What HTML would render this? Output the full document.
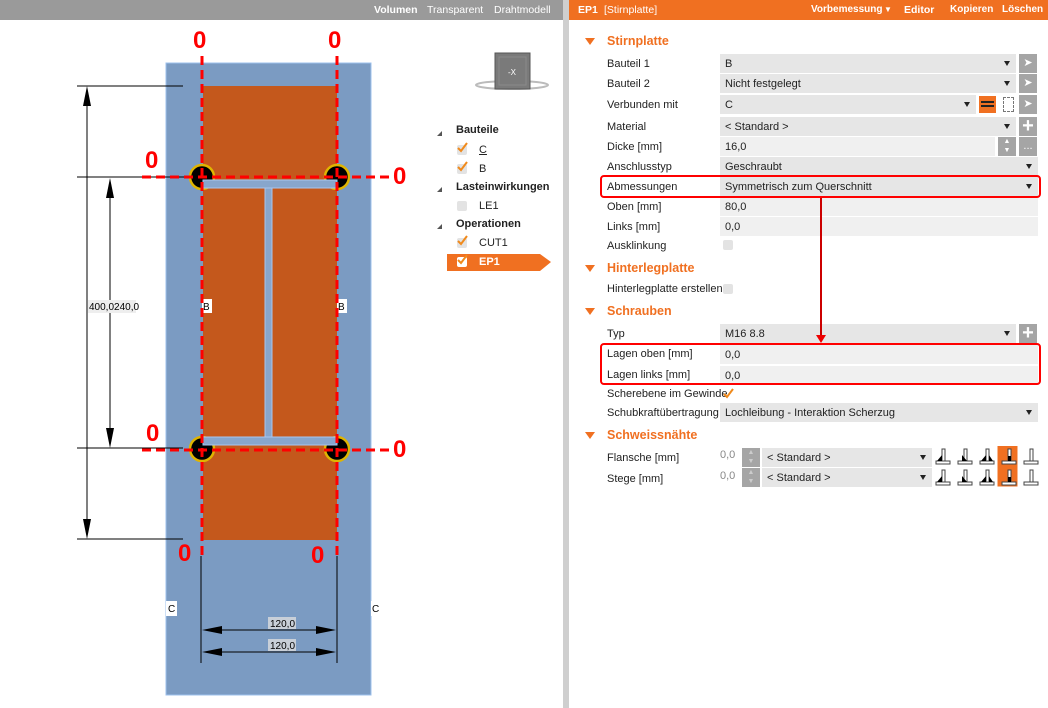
<!DOCTYPE html>
<html><head><meta charset="utf-8"><style>
*{margin:0;padding:0;box-sizing:border-box}
body{width:1048px;height:708px;overflow:hidden;background:#fff;font-family:"Liberation Sans",sans-serif;font-size:11px;color:#222;position:relative}
.a{position:absolute}
.lbl{position:absolute;left:607px;font-size:11px;line-height:14px}
.in{position:absolute;left:720px;height:19px;background:#e6e6e6;padding-left:5px;line-height:20px;font-size:11px}
.tx{background:#f0f0f0}
.dd:after{content:"";position:absolute;right:6px;top:7px;border-left:3.5px solid transparent;border-right:3.5px solid transparent;border-top:5px solid #222}
.btn{position:absolute;left:1019px;width:18px;height:19px;background:#a5a5a5;color:#fff;text-align:center;line-height:18px}
.sec{position:absolute;left:607px;color:#f07021;font-weight:bold;font-size:12.5px}
.tri{position:absolute;left:585px;width:0;height:0;border-left:5px solid transparent;border-right:5px solid transparent;border-top:7px solid #f07021}
.cb{position:absolute;width:10px;height:10px;background:#e3e3e3;border-radius:2px}
.ck{position:absolute;width:12px;height:12px}
.z{position:absolute;color:#f00;font-weight:bold;font-size:24px;line-height:24px}
.tt{position:absolute;width:0;height:0;border-left:5px solid transparent;border-bottom:5px solid #555}
</style></head><body>
<!-- top bars -->
<div class="a" style="left:0;top:0;width:563px;height:20px;background:#9a9a9a"></div>
<div class="a" style="left:374px;top:4px;color:#fff;font-weight:bold;font-size:10.5px">Volumen</div>
<div class="a" style="left:427px;top:4px;color:#fff;font-size:10.5px">Transparent</div>
<div class="a" style="left:494px;top:4px;color:#fff;font-size:10.5px">Drahtmodell</div>
<div class="a" style="left:563px;top:0;width:6px;height:708px;background:#cfcfcf"></div>
<div class="a" style="left:569px;top:0;width:479px;height:20px;background:#f07021"></div>
<div class="a" style="left:578px;top:4px;color:#fff;font-weight:bold;font-size:10.5px">EP1</div>
<div class="a" style="left:604px;top:4px;color:#fff;font-size:10.5px">[Stirnplatte]</div>
<div class="a" style="left:811px;top:4px;color:#fff;font-weight:bold;font-size:10px">Vorbemessung</div>
<div class="a" style="left:884px;top:5px;color:#fff;font-size:8px">▼</div>
<div class="a" style="left:904px;top:4px;color:#fff;font-weight:bold;font-size:10.5px">Editor</div>
<div class="a" style="left:950px;top:4px;color:#fff;font-weight:bold;font-size:10px">Kopieren</div>
<div class="a" style="left:1002px;top:4px;color:#fff;font-weight:bold;font-size:10px">Löschen</div>

<!-- drawing -->
<svg class="a" style="left:0;top:0" width="563" height="708">
<rect x="166" y="63" width="205" height="632" fill="#7b9bc2" stroke="#9ec0ec"/>
<rect x="203" y="86" width="134" height="454" fill="#c4581c"/>
<g stroke="#000" stroke-width="1" fill="none">
<line x1="77" y1="86" x2="183" y2="86"/><line x1="77" y1="177" x2="200" y2="177"/>
<line x1="77" y1="448" x2="183" y2="448"/><line x1="77" y1="539" x2="183" y2="539"/>
<line x1="87" y1="90" x2="87" y2="535"/><line x1="110" y1="182" x2="110" y2="445"/>
<line x1="201" y1="556" x2="201" y2="663"/><line x1="337" y1="556" x2="337" y2="663"/>
<line x1="205" y1="630" x2="334" y2="630"/><line x1="205" y1="652" x2="334" y2="652"/>
</g>
<g fill="#000">
<polygon points="87,86 83,106 91,106"/><polygon points="87,539 83,519 91,519"/>
<polygon points="110,178 106,198 114,198"/><polygon points="110,448 106,428 114,428"/>
<polygon points="202,630 222,626 222,634"/><polygon points="336,630 316,626 316,634"/>
<polygon points="202,652 222,648 222,656"/><polygon points="336,652 316,648 316,656"/>
</g>
<rect x="88" y="300" width="48" height="13" fill="#eee"/>
<text x="89" y="310" font-size="10" font-family="Liberation Sans">400,0240,0</text>
<rect x="268" y="617" width="28" height="12" fill="#c8cfd8"/><text x="270" y="627" font-size="10" font-family="Liberation Sans">120,0</text>
<rect x="268" y="639" width="28" height="12" fill="#c8cfd8"/><text x="270" y="649" font-size="10" font-family="Liberation Sans">120,0</text>
<rect x="202" y="299" width="10" height="14" fill="#fff"/><text x="203" y="310" font-size="10" font-family="Liberation Sans">B</text>
<rect x="337" y="299" width="10" height="14" fill="#fff"/><text x="338" y="310" font-size="10" font-family="Liberation Sans">B</text>
<rect x="166" y="601" width="11" height="15" fill="#fff"/><text x="168" y="612" font-size="10" font-family="Liberation Sans">C</text>
<rect x="371" y="601" width="11" height="15" fill="#fff"/><text x="372" y="612" font-size="10" font-family="Liberation Sans">C</text>
<g fill="#000" stroke="#e0b400" stroke-width="2.5">
<circle cx="202" cy="177" r="12"/><circle cx="337" cy="177" r="12"/>
<circle cx="202" cy="449" r="12"/><circle cx="337" cy="449" r="12"/>
</g>
<rect x="203" y="180" width="134" height="8" fill="#88a6cc" stroke="#a9c6ee"/>
<rect x="265" y="188" width="7" height="254" fill="#88a6cc" stroke="#a9c6ee"/>
<rect x="203" y="437" width="134" height="8" fill="#88a6cc" stroke="#a9c6ee"/>
<g stroke="#f00" stroke-width="3" stroke-dasharray="9,5" fill="none">
<line x1="202" y1="56" x2="202" y2="555"/><line x1="337" y1="56" x2="337" y2="555"/>
<line x1="142" y1="177" x2="390" y2="177"/><line x1="142" y1="450" x2="390" y2="450"/>
</g>
<!-- nav cube -->
<ellipse cx="512" cy="85" rx="36" ry="4" fill="none" stroke="#bbb" stroke-width="2"/>
<rect x="495" y="53" width="35" height="36" fill="#7a7a7a" stroke="#555"/>
<rect x="499" y="57" width="27" height="28" fill="none" stroke="#8a8a8a"/>
<text x="508" y="75" font-size="8" fill="#fff" font-family="Liberation Sans">-X</text>
<polygon points="447,254 540,254 551,262 540,271 447,271" fill="#f07021"/>
</svg>
<div class="z" style="left:193px;top:29px">0</div>
<div class="z" style="left:328px;top:29px">0</div>
<div class="z" style="left:145px;top:149px">0</div>
<div class="z" style="left:393px;top:165px">0</div>
<div class="z" style="left:146px;top:422px">0</div>
<div class="z" style="left:393px;top:438px">0</div>
<div class="z" style="left:178px;top:542px">0</div>
<div class="z" style="left:311px;top:544px">0</div>

<div class="tt" style="left:437px;top:131px"></div>
<div class="tt" style="left:437px;top:187px"></div>
<div class="tt" style="left:437px;top:224px"></div>
<div class="a" style="left:456px;top:124px;font-weight:bold">Bauteile</div>
<div class="cb" style="left:457px;top:145px"></div><svg class="ck" style="left:457px;top:141px"><path d="M1 7 L4 10 L10 2" stroke="#f08a1c" stroke-width="2" fill="none"/></svg><div class="a" style="left:479px;top:144px;text-decoration:underline">C</div>
<div class="cb" style="left:457px;top:164px"></div><svg class="ck" style="left:457px;top:160px"><path d="M1 7 L4 10 L10 2" stroke="#f08a1c" stroke-width="2" fill="none"/></svg><div class="a" style="left:479px;top:163px">B</div>
<div class="a" style="left:456px;top:181px;font-weight:bold">Lasteinwirkungen</div>
<div class="cb" style="left:457px;top:201px"></div><div class="a" style="left:479px;top:200px">LE1</div>
<div class="a" style="left:456px;top:218px;font-weight:bold">Operationen</div>
<div class="cb" style="left:457px;top:238px"></div><svg class="ck" style="left:457px;top:234px"><path d="M1 7 L4 10 L10 2" stroke="#f08a1c" stroke-width="2" fill="none"/></svg><div class="a" style="left:479px;top:237px">CUT1</div>
<div class="cb" style="left:457px;top:257px;background:#fff"></div><svg class="ck" style="left:457px;top:253px"><path d="M1 7 L4 10 L10 2" stroke="#f08a1c" stroke-width="2" fill="none"/></svg><div class="a" style="left:479px;top:256px;color:#fff;font-weight:bold">EP1</div>

<!-- properties -->
<div class="tri" style="top:38px"></div><div class="sec" style="top:34px">Stirnplatte</div>
<div class="lbl" style="top:57px">Bauteil 1</div><div class="in dd" style="top:54px;width:296px">B</div><div class="btn" style="top:54px">➤</div>
<div class="lbl" style="top:77px">Bauteil 2</div><div class="in dd" style="top:74px;width:296px">Nicht festgelegt</div><div class="btn" style="top:74px">➤</div>
<div class="lbl" style="top:98px">Verbunden mit</div><div class="in dd" style="top:95px;width:256px">C</div>
<div class="a" style="left:979px;top:96px;width:17px;height:17px;background:#f07021"><div class="a" style="left:2px;top:5px;width:13px;height:6px;border:2px solid #222;border-left:none;border-right:none"></div></div>
<div class="a" style="left:1003px;top:97px;width:11px;height:15px;border:1px dashed #777"></div>
<div class="btn" style="top:95px">➤</div>
<div class="lbl" style="top:120px">Material</div><div class="in dd" style="top:117px;width:296px">&lt; Standard &gt;</div><div class="btn" style="top:117px;font-size:20px;font-weight:bold">+</div>
<div class="lbl" style="top:140px">Dicke [mm]</div><div class="in tx" style="top:137px;width:275px">16,0</div><div class="btn" style="top:137px;left:998px;font-size:7px;line-height:9px">▲<br>▼</div><div class="btn" style="top:137px">...</div>
<div class="lbl" style="top:160px">Anschlusstyp</div><div class="in dd" style="top:157px;width:318px">Geschraubt</div>
<div class="lbl" style="top:180px">Abmessungen</div><div class="in dd" style="top:177px;width:318px">Symmetrisch zum Querschnitt</div>
<div class="lbl" style="top:200px">Oben [mm]</div><div class="in tx" style="top:197px;width:318px">80,0</div>
<div class="lbl" style="top:220px">Links [mm]</div><div class="in tx" style="top:217px;width:318px">0,0</div>
<div class="lbl" style="top:239px">Ausklinkung</div><div class="cb" style="left:723px;top:240px"></div>
<div class="tri" style="top:265px"></div><div class="sec" style="top:261px">Hinterlegplatte</div>
<div class="lbl" style="top:282px">Hinterlegplatte erstellen</div><div class="cb" style="left:723px;top:284px"></div>
<div class="tri" style="top:308px"></div><div class="sec" style="top:304px">Schrauben</div>
<div class="lbl" style="top:327px">Typ</div><div class="in dd" style="top:324px;width:296px">M16 8.8</div><div class="btn" style="top:324px;font-size:20px;font-weight:bold">+</div>
<div class="lbl" style="top:347px">Lagen oben [mm]</div><div class="in tx" style="top:345px;width:318px">0,0</div>
<div class="lbl" style="top:368px">Lagen links [mm]</div><div class="in tx" style="top:366px;width:318px">0,0</div>
<div class="lbl" style="top:387px">Scherebene im Gewinde</div><svg class="ck" style="left:723px;top:387px"><path d="M1 7 L4 10 L10 2" stroke="#f08a1c" stroke-width="2" fill="none"/></svg>
<div class="lbl" style="top:406px">Schubkraftübertragung</div><div class="in dd" style="top:403px;width:318px">Lochleibung - Interaktion Scherzug</div>
<div class="tri" style="top:432px"></div><div class="sec" style="top:428px">Schweissnähte</div>
<div class="lbl" style="top:451px">Flansche [mm]</div><div class="a" style="left:720px;top:449px;color:#888">0,0</div>
<div class="btn" style="left:742px;top:448px;font-size:7px;line-height:9px;color:#ccc">▲<br>▼</div><div class="in dd" style="left:762px;top:448px;width:170px">&lt; Standard &gt;</div>
<div class="lbl" style="top:472px">Stege [mm]</div><div class="a" style="left:720px;top:470px;color:#888">0,0</div>
<div class="btn" style="left:742px;top:468px;font-size:7px;line-height:9px;color:#ccc">▲<br>▼</div><div class="in dd" style="left:762px;top:468px;width:170px">&lt; Standard &gt;</div>
<svg class="a" style="left:934px;top:446px" width="106" height="44">
<g stroke="#444" fill="#fff" stroke-width="1">
<g id="w"><rect x="2" y="15" width="14" height="3"/><rect x="8" y="3" width="3" height="12"/></g>
<use href="#w" x="22"/><use href="#w" x="44"/><rect x="64" y="0" width="19" height="20" fill="#f07021" stroke="#f07021"/><use href="#w" x="66"/><use href="#w" x="88"/>
<use href="#w" y="21"/><use href="#w" x="22" y="21"/><use href="#w" x="44" y="21"/><rect x="64" y="20" width="19" height="20" fill="#f07021" stroke="#f07021"/><use href="#w" x="66" y="21"/><use href="#w" x="88" y="21"/>
</g>
<g fill="#000"><polygon points="3,15 8,15 8,9"/><polygon points="33,15 28,15 28,9"/><polygon points="47,15 52,15 52,9"/><polygon points="59,15 55,15 55,9"/><polygon points="3,36 8,36 8,30"/><polygon points="33,36 28,36 28,30"/><polygon points="47,36 52,36 52,30"/><polygon points="59,36 55,36 55,30"/><rect x="74" y="10" width="3" height="5"/><rect x="74" y="31" width="3" height="5"/></g>
</svg>
<!-- annotations -->
<div class="a" style="left:600px;top:175px;width:441px;height:23px;border:2.5px solid #f00;border-radius:4px"></div>
<div class="a" style="left:600px;top:343px;width:441px;height:42px;border:2.5px solid #f00;border-radius:4px"></div>
<div class="a" style="left:820px;top:198px;width:1.5px;height:138px;background:#c00"></div>
<div class="a" style="left:816px;top:335px;border-left:5px solid transparent;border-right:5px solid transparent;border-top:8px solid #e00"></div>
</body></html>
